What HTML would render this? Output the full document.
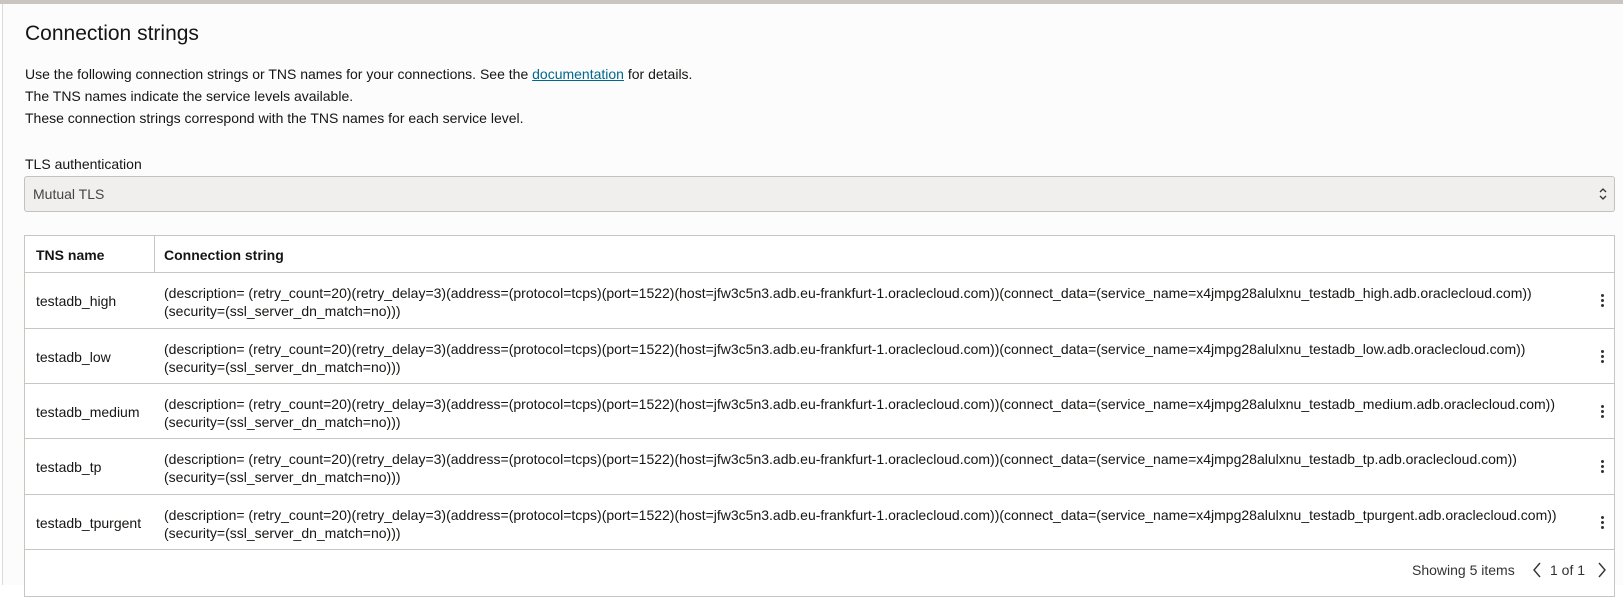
<!DOCTYPE html>
<html><head><style>
body{margin:0;width:1623px;height:585px;background:#fff;font-family:"Liberation Sans",Arial,sans-serif;color:#161513;overflow:hidden;position:relative}
.top{position:absolute;left:0;top:0;width:1623px;height:4px;background:#c9c6c2}
.panel{position:absolute;left:2px;top:4px;width:1621px;height:581px;border-left:1px solid #dcdad7;background:#fcfcfc}
h1{position:absolute;left:25px;top:22px;margin:0;font-size:21px;font-weight:normal;line-height:24px}
.p{position:absolute;left:25px;font-size:14px;line-height:16px}
a{color:#00688c;text-decoration:underline}
.sel{position:absolute;left:24px;top:176px;width:1589px;height:34px;background:#f1efed;border:1px solid #c4c2bf;border-radius:3px;font-size:14px;color:#444}
.tbl{position:absolute;left:24px;top:235px;width:1589px;height:360px;border:1px solid #c9c6c2;background:#fff}
.row{position:absolute;left:0;width:1589px;border-top:1px solid #c9c6c2;font-size:14px}
.c1{position:absolute;left:11px;line-height:16px}
.c2{position:absolute;left:139px;line-height:18px}
.dots{position:absolute;left:1576px;width:3px}
.dots i{display:block;width:3px;height:3px;background:#333;border-radius:50%;margin-bottom:2px}
</style></head><body>
<div class="top"></div>
<div class="panel"></div>
<h1>Connection strings</h1>
<div class="p" style="top:66px">Use the following connection strings or TNS names for your connections. See the <a>documentation</a> for details.</div>
<div class="p" style="top:88px">The TNS names indicate the service levels available.</div>
<div class="p" style="top:110px">These connection strings correspond with the TNS names for each service level.</div>
<div class="p" style="top:156px">TLS authentication</div>
<div class="sel"><span style="position:absolute;left:8px;top:9px">Mutual TLS</span>
<svg style="position:absolute;right:6px;top:10px" width="10" height="14" viewBox="0 0 10 14"><path d="M2 5L5 2L8 5M2 9L5 12L8 9" fill="none" stroke="#333" stroke-width="1.3"/></svg></div>
<div class="tbl">
<div style="position:absolute;left:129px;top:0;width:1px;height:36px;background:#c9c6c2"></div>
<div style="position:absolute;left:11px;top:11px;font-size:14px;font-weight:bold">TNS name</div>
<div style="position:absolute;left:139px;top:11px;font-size:14px;font-weight:bold">Connection string</div>

<div class="row" style="top:36px;height:55px"><span class="c1" style="top:20px">testadb_high</span><div class="c2" style="top:11px">(description= (retry_count=20)(retry_delay=3)(address=(protocol=tcps)(port=1522)(host=jfw3c5n3.adb.eu-frankfurt-1.oraclecloud.com))(connect_data=(service_name=x4jmpg28alulxnu_testadb_high.adb.oraclecloud.com))<br>(security=(ssl_server_dn_match=no)))</div><div class="dots" style="top:21px"><i></i><i></i><i></i></div></div>
<div class="row" style="top:92px;height:55px"><span class="c1" style="top:20px">testadb_low</span><div class="c2" style="top:11px">(description= (retry_count=20)(retry_delay=3)(address=(protocol=tcps)(port=1522)(host=jfw3c5n3.adb.eu-frankfurt-1.oraclecloud.com))(connect_data=(service_name=x4jmpg28alulxnu_testadb_low.adb.oraclecloud.com))<br>(security=(ssl_server_dn_match=no)))</div><div class="dots" style="top:21px"><i></i><i></i><i></i></div></div>
<div class="row" style="top:147px;height:55px"><span class="c1" style="top:20px">testadb_medium</span><div class="c2" style="top:11px">(description= (retry_count=20)(retry_delay=3)(address=(protocol=tcps)(port=1522)(host=jfw3c5n3.adb.eu-frankfurt-1.oraclecloud.com))(connect_data=(service_name=x4jmpg28alulxnu_testadb_medium.adb.oraclecloud.com))<br>(security=(ssl_server_dn_match=no)))</div><div class="dots" style="top:21px"><i></i><i></i><i></i></div></div>
<div class="row" style="top:202px;height:55px"><span class="c1" style="top:20px">testadb_tp</span><div class="c2" style="top:11px">(description= (retry_count=20)(retry_delay=3)(address=(protocol=tcps)(port=1522)(host=jfw3c5n3.adb.eu-frankfurt-1.oraclecloud.com))(connect_data=(service_name=x4jmpg28alulxnu_testadb_tp.adb.oraclecloud.com))<br>(security=(ssl_server_dn_match=no)))</div><div class="dots" style="top:21px"><i></i><i></i><i></i></div></div>
<div class="row" style="top:258px;height:55px"><span class="c1" style="top:20px">testadb_tpurgent</span><div class="c2" style="top:11px">(description= (retry_count=20)(retry_delay=3)(address=(protocol=tcps)(port=1522)(host=jfw3c5n3.adb.eu-frankfurt-1.oraclecloud.com))(connect_data=(service_name=x4jmpg28alulxnu_testadb_tpurgent.adb.oraclecloud.com))<br>(security=(ssl_server_dn_match=no)))</div><div class="dots" style="top:21px"><i></i><i></i><i></i></div></div>
<div class="row" style="top:313px;height:40px">
<span style="position:absolute;left:1387px;top:12px;color:#333">Showing 5 items</span>
<svg style="position:absolute;left:1507px;top:12px" width="10" height="16" viewBox="0 0 10 16"><path d="M8 1L2 8L8 15" fill="none" stroke="#333" stroke-width="1.4"/></svg>
<span style="position:absolute;left:1525px;top:12px;color:#333">1 of 1</span>
<svg style="position:absolute;left:1572px;top:12px" width="10" height="16" viewBox="0 0 10 16"><path d="M2 1L8 8L2 15" fill="none" stroke="#333" stroke-width="1.4"/></svg>
</div>
</div>
</body></html>
